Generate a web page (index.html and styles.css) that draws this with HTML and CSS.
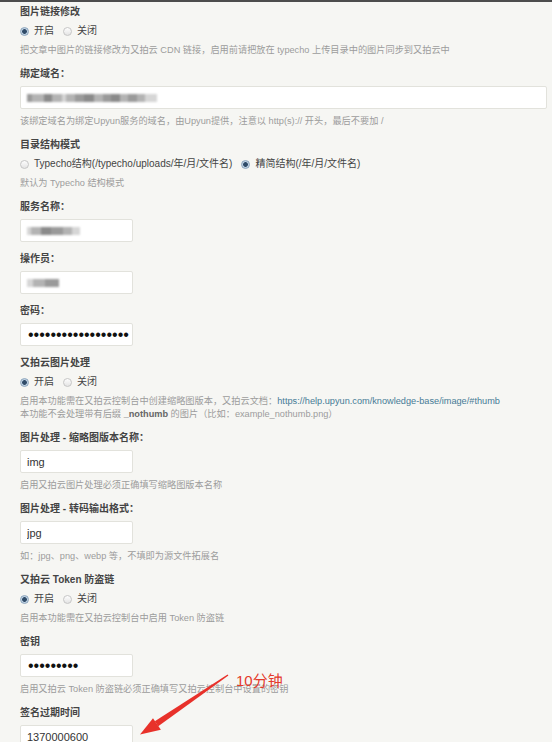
FILE: index.html
```html
<!DOCTYPE html>
<html lang="zh-CN">
<head>
<meta charset="utf-8">
<title>又拍云插件设置</title>
<link rel="stylesheet" href="styles.css">
</head>
<body>
<div class="topbar"></div>
<main class="form">
  <section class="field">
    <span class="field-label">图片链接修改</span>
    <div class="radios">
      <span class="radio"><span class="dot on"></span>开启</span>
      <span class="radio"><span class="dot"></span>关闭</span>
    </div>
    <p class="desc">把文章中图片的链接修改为又拍云 CDN 链接，启用前请把放在 typecho 上传目录中的图片同步到又拍云中</p>
  </section>

  <section class="field">
    <span class="field-label">绑定域名：</span>
    <div class="input wide">
      <span class="blur">
        <i class="b1 w5"></i><i class="b2 w12"></i><i class="b3 w8"></i><i class="b2 w10"></i><i class="b4 w4"></i><i class="b2 w9"></i><i class="b1 w9"></i><i class="b3 w10"></i><i class="b2 w9"></i><i class="b1 w8"></i><i class="b3 w9"></i><i class="b2 w8"></i><i class="b1 w9"></i><i class="b2 w8"></i><i class="b4 w12"></i>
      </span>
    </div>
    <p class="desc">该绑定域名为绑定Upyun服务的域名，由Upyun提供，注意以 http(s):// 开头，最后不要加 /</p>
  </section>

  <section class="field">
    <span class="field-label">目录结构模式</span>
    <div class="radios">
      <span class="radio"><span class="dot"></span>Typecho结构(/typecho/uploads/年/月/文件名)</span>
      <span class="radio"><span class="dot on"></span>精简结构(/年/月/文件名)</span>
    </div>
    <p class="desc">默认为 Typecho 结构模式</p>
  </section>

  <section class="field">
    <span class="field-label">服务名称：</span>
    <div class="input">
      <span class="blur"><i class="b4 w4"></i><i class="b2 w10"></i><i class="b3 w10"></i><i class="b1 w12"></i><i class="b2 w9"></i><i class="b4 w8"></i></span>
    </div>
  </section>

  <section class="field">
    <span class="field-label">操作员：</span>
    <div class="input">
      <span class="blur"><i class="b4 w6"></i><i class="b2 w12"></i><i class="b1 w14"></i></span>
    </div>
  </section>

  <section class="field">
    <span class="field-label">密码：</span>
    <div class="input secret">••••••••••••••••••</div>
  </section>

  <section class="field">
    <span class="field-label">又拍云图片处理</span>
    <div class="radios">
      <span class="radio"><span class="dot on"></span>开启</span>
      <span class="radio"><span class="dot"></span>关闭</span>
    </div>
    <p class="desc">启用本功能需在又拍云控制台中创建缩略图版本，又拍云文档：<a class="link" href="#thumb">https://help.upyun.com/knowledge-base/image/#thumb</a><br>本功能不会处理带有后缀 <b class="code">_nothumb</b> 的图片（比如：example_nothumb.png）</p>
  </section>

  <section class="field">
    <span class="field-label">图片处理 - 缩略图版本名称：</span>
    <input class="input" type="text" value="img" readonly>
    <p class="desc">启用又拍云图片处理必须正确填写缩略图版本名称</p>
  </section>

  <section class="field">
    <span class="field-label">图片处理 - 转码输出格式：</span>
    <input class="input" type="text" value="jpg" readonly>
    <p class="desc">如：jpg、png、webp 等，不填即为源文件拓展名</p>
  </section>

  <section class="field">
    <span class="field-label">又拍云 Token 防盗链</span>
    <div class="radios">
      <span class="radio"><span class="dot on"></span>开启</span>
      <span class="radio"><span class="dot"></span>关闭</span>
    </div>
    <p class="desc">启用本功能需在又拍云控制台中启用 Token 防盗链</p>
  </section>

  <section class="field">
    <span class="field-label">密钥</span>
    <div class="input secret">•••••••••</div>
    <p class="desc">启用又拍云 Token 防盗链必须正确填写又拍云控制台中设置的密钥</p>
  </section>

  <section class="field">
    <span class="field-label">签名过期时间</span>
    <input class="input" type="text" value="1370000600" readonly>
  </section>
</main>

<div class="note">10分钟</div>
<svg class="arrow" width="552" height="742" viewBox="0 0 552 742" aria-hidden="true">
  <polygon points="228.4,675.6 227.6,674.4 154.8,721.2 158.2,726.2" fill="#e8312a"/>
  <polygon points="140,734.5 160.9,729.8 153.0,718.2" fill="#e8312a"/>
</svg>
</body>
</html>
```

FILE: styles.css
```css
html {
  overflow: hidden;
}

body {
  margin: 0;
  position: relative;
  background: #f6f6f3;
  color: #444;
  font-family: "Liberation Sans", "Noto Sans CJK SC", sans-serif;
}

.topbar {
  height: 2px;
  background: #4d4d4d;
}

.form {
  padding: 3px 5px 0 20px;
}

.field {
  margin-bottom: 10px;
}

.field-label {
  display: block;
  font-size: 10px;
  line-height: 14px;
  font-weight: bold;
  color: #444;
  margin-bottom: 5px;
}

.radios {
  display: flex;
  gap: 9px;
  font-size: 10px;
  line-height: 14px;
  color: #444;
}

.radio {
  display: flex;
  align-items: center;
  gap: 5px;
}

.dot {
  width: 9px;
  height: 9px;
  box-sizing: border-box;
  border-radius: 50%;
  border: 1px solid #c6c6c6;
  background: linear-gradient(#fdfdfd, #e4e4e4);
}

.dot.on {
  border-color: #8ba4bc;
  background: radial-gradient(circle, #2f4b68 0 2px, #c0d2e3 2.7px);
}

.desc {
  margin: 6px 0 0;
  font-size: 9.2px;
  line-height: 13px;
  color: #9c9c9c;
}

.link {
  color: #467b96;
  text-decoration: none;
}

.code {
  color: #666;
  font-weight: bold;
}

.input {
  display: flex;
  align-items: center;
  box-sizing: border-box;
  width: 113px;
  height: 23px;
  margin: 0;
  padding: 0 6px;
  border: 1px solid #e2e2dc;
  border-radius: 2px;
  background: #fff;
  color: #333;
  font-family: "Liberation Sans", "Noto Sans CJK SC", sans-serif;
  font-size: 11px;
  outline: none;
}

.input.wide {
  width: 100%;
}

.secret {
  font-size: 16px;
  color: #111;
  padding-left: 7px;
}

.blur {
  display: flex;
  align-items: center;
  height: 8px;
  filter: blur(1px);
}

.blur i {
  display: block;
  height: 8px;
}

.b1 { background: #9a9a9a; }
.b2 { background: #b3b3b3; }
.b3 { background: #8a8a8a; }
.b4 { background: #d6d6d6; }

.w4 { width: 4px; }
.w5 { width: 5px; }
.w6 { width: 6px; }
.w8 { width: 8px; }
.w9 { width: 9px; }
.w10 { width: 10px; }
.w12 { width: 12px; }
.w14 { width: 14px; }

.note {
  position: absolute;
  left: 236px;
  top: 672px;
  font-size: 15px;
  line-height: 17px;
  color: #e4392b;
}

.arrow {
  position: absolute;
  left: 0;
  top: 0;
  pointer-events: none;
}
```
